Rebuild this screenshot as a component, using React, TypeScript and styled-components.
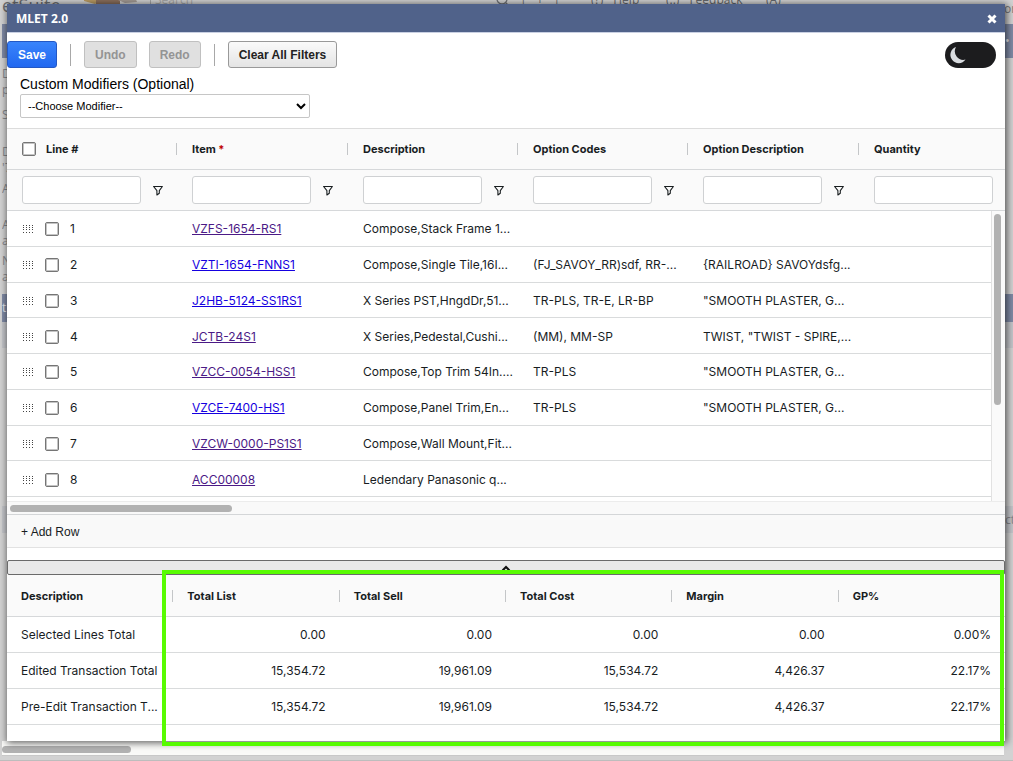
import React from "react";
import styled, { createGlobalStyle } from "styled-components";

const GlobalStyle = createGlobalStyle`
  * { box-sizing: border-box; }
  body { margin: 0; background: #d2d2d2; font-family: "Liberation Sans", Arial, sans-serif; color: #000; }
  button, input, select { font-family: inherit; margin: 0; }
`;

const uiFont = `Inter, "Liberation Sans", sans-serif`;

/* ---------- page behind the dialog ---------- */

const Page = styled.div`
  display: grid;
  grid-template-columns: minmax(0, 1fr);
  min-height: 100vh;
  overflow: hidden;
`;

const Backdrop = styled.div`
  grid-area: 1 / 1;
  display: flex;
  flex-direction: column;
  background: #d2d2d2;
  color: #77797e;
  font: 12px/16px "Open Sans", sans-serif;
`;

const TopBar = styled.div`
  display: flex;
  height: 24px;
  overflow: hidden;
  white-space: nowrap;
  justify-content: space-between;
`;

const TopItems = styled.div`
  display: flex;
  align-items: center;
  height: 16px;
  margin-top: -8px;
`;

const Brand = styled.span`
  align-self: flex-start;
  width: 84px;
  padding-left: 2px;
  font-size: 18px;
  line-height: 26px;
  color: #6d6e70;
`;

const SearchHint = styled.span`
  width: 346px;
  margin-left: 8px;
  padding-left: 4px;
  border-left: 1px solid #a5a5a5;
  color: #a8a8a8;
`;

const TopLink = styled.span<{ $w: number }>`
  width: ${(p) => p.$w}px;
  display: flex;
  gap: 10px;
  color: #66686c;
`;

const Corner = styled.span`
  width: 9px;
  line-height: 18px;
`;

const Band = styled.div<{ $h: number; $tone?: string }>`
  height: ${(p) => p.$h}px;
  flex: none;
  display: flex;
  justify-content: space-between;
  align-items: center;
  overflow: hidden;
  margin-left: 2px;
  background: ${(p) => p.$tone || "transparent"};
  color: ${(p) => (p.$tone === "#7f8aa5" ? "#e6e8ee" : "#85878c")};
`;

const Edge = styled.span`
  width: 8px;
  overflow: hidden;
  white-space: nowrap;
`;

const FootArea = styled.div`
  margin-top: auto;
  height: 20px;
  flex: none;
  display: flex;
  flex-direction: column;
  border-bottom: 1px solid #bdbdbd;
`;

const FootScroll = styled.div`
  height: 15px;
  margin: 0 9px 0 2px;
  padding-top: 5px;
  background: #fafaf8;
  border-bottom: 1px solid #c8c8c8;
`;

const Thumb = styled.div<{ $w: number }>`
  width: ${(p) => p.$w}px;
  height: 7px;
  border-radius: 4px;
  background: #b2b2b2;
`;

/* ---------- dialog ---------- */

const Dialog = styled.section`
  grid-area: 1 / 1;
  align-self: start;
  position: relative;
  margin: 4px 8px 20px 7px;
  background: #fff;
  box-shadow: 1px 1px 7px 1px rgba(0, 0, 0, 0.6);
`;

const TitleBar = styled.header`
  display: flex;
  align-items: center;
  justify-content: space-between;
  height: 29px;
  padding: 1px 8px 0 9px;
  background: #50628a;
  border-bottom: 1px solid #c9d0e2;
`;

const Title = styled.h1`
  margin: 0;
  color: #fff;
  font: bold 12px/16px "Open Sans", sans-serif;
`;

const CloseButton = styled.button`
  display: flex;
  padding: 0;
  border: 0;
  background: none;
`;

const Toolbar = styled.div`
  display: flex;
  align-items: center;
  gap: 13px;
  padding: 8px 9px 8px 0;
`;

const ToolGroup = styled.div`
  display: flex;
  gap: 12px;
`;

const ToolButton = styled.button<{ $kind?: "primary" | "plain" }>`
  height: 27px;
  padding: 0 10px;
  border: 1px solid ${(p) => (p.$kind === "primary" ? "#2458c4" : "#999")};
  border-radius: 3px;
  background: ${(p) =>
    p.$kind === "primary"
      ? "linear-gradient(#3a84fb, #2168f0)"
      : "linear-gradient(#fafafa, #e4e4e4)"};
  color: ${(p) => (p.$kind === "primary" ? "#fff" : "#222")};
  font-size: 12px;
  line-height: 16px;
  font-weight: bold;
  white-space: nowrap;
  &:disabled {
    border-color: #c0c0c0;
    background: #e0e0e0;
    color: #949494;
  }
`;

const Divider = styled.span`
  width: 1px;
  height: 22px;
  background: #a8a8a8;
`;

const ThemeSwitch = styled.label`
  display: flex;
  align-items: center;
  width: 51px;
  height: 26px;
  margin-left: auto;
  padding-left: 4px;
  border-radius: 13px;
  background: #1c1c1e;
`;

const HiddenInput = styled.input`
  appearance: none;
  width: 0;
  height: 0;
`;

const Modifier = styled.div`
  display: flex;
  flex-direction: column;
  align-items: flex-start;
  gap: 2px;
  padding: 0 13px 10px;
`;

const ModifierLabel = styled.label`
  font-size: 14px;
  line-height: 16px;
`;

const ModifierSelect = styled.select`
  width: 290px;
  height: 24px;
  padding: 0 3px;
  border: 1px solid #c6c6c6;
  border-radius: 2px;
  background: #fff;
  color: #000;
  font-size: 11px;
`;

/* ---------- line grid ---------- */

const GridPanel = styled.div`
  position: relative;
  overflow: hidden;
  padding-bottom: 4px;
  border-top: 1px solid #dcdcdc;
`;

const Table = styled.table`
  width: 100%;
  table-layout: fixed;
  border-collapse: separate;
  border-spacing: 0;
  color: #181d1f;
  font: 12px/16px ${uiFont};
`;

const LineTable = styled(Table)`
  height: 368px;
`;

const HeadCell = styled.th<{ $h: number; $pad: number }>`
  height: ${(p) => p.$h}px;
  padding: 0 0 0 ${(p) => p.$pad}px;
  background: #fafafa;
  border-bottom: 1px solid #d6d8da;
  font-size: 11px;
  font-weight: 700;
  text-align: left;
`;

const HeadInner = styled.div<{ $sep: boolean }>`
  display: flex;
  align-items: center;
  gap: 10px;
  height: 12px;
  white-space: nowrap;
  border-right: ${(p) => (p.$sep ? "1px solid #c4c6c8" : "0")};
`;

const Required = styled.span`
  color: #c00000;
`;

const FilterRow = styled.div`
  display: flex;
  align-items: center;
  gap: 12px;
`;

const FilterInput = styled.input`
  flex: none;
  width: 119px;
  height: 28px;
  padding: 0 6px;
  border: 1px solid #cfd1d3;
  border-radius: 3px;
  background: #fff;
`;

const IconButton = styled.button`
  display: flex;
  padding: 0;
  border: 0;
  background: none;
  color: #181d1f;
`;

const Cell = styled.td<{ $num?: boolean }>`
  padding: 2px 14px 0 15px;
  border-bottom: 1px solid #d9dbdc;
  overflow: hidden;
  white-space: nowrap;
  text-align: ${(p) => (p.$num ? "right" : "left")};
`;

const LineCell = styled.div`
  display: flex;
  align-items: center;
  gap: 11px;
`;

const Check = styled.input`
  appearance: none;
  flex: none;
  width: 14px;
  height: 14px;
  border: 1px solid #757575;
  border-radius: 2px;
  box-shadow: inset 0 0 0 1px #c4c4c4;
  background: #fff;
`;

const ItemLink = styled.a<{ $seen: boolean }>`
  color: ${(p) => (p.$seen ? "#4b1a86" : "#1500e0")};
  text-decoration: underline;
`;

const VScroll = styled.div`
  position: absolute;
  top: 82px;
  right: 0;
  bottom: 0;
  width: 14px;
  padding: 3px 4px 0 2px;
  background: #fafafa;
  border-left: 1px solid #e2e2e2;
`;

const VThumb = styled.div`
  height: 191px;
  border-radius: 4px;
  background: #b2b2b2;
`;

const HScroll = styled.div`
  height: 14px;
  padding: 3px 3px 0;
  background: #f9f9f9;
  border-top: 1px solid #ececec;
  border-bottom: 1px solid #d4d6d8;
`;

const AddRow = styled.button`
  display: block;
  width: 100%;
  height: 33px;
  padding: 1px 14px 0;
  border: 0;
  border-bottom: 1px solid #e2e2e2;
  background: #f9f9f9;
  color: #181d1f;
  font-size: 12px;
  text-align: left;
`;

const Splitter = styled.button`
  display: flex;
  justify-content: center;
  align-items: center;
  width: 100%;
  height: 15px;
  margin-top: 12px;
  padding: 0;
  border: 1px solid #6a6a6a;
  border-radius: 2px;
  background: #e9e9e9;
`;

/* ---------- totals ---------- */

const Totals = styled.div`
  padding-bottom: 16px;
`;

const TotalCell = styled(Cell)`
  height: 36px;
  padding: 1px 14px 0;
`;

const TotalName = styled(TotalCell)`
  padding-right: 0;
`;

const Highlight = styled.div`
  position: absolute;
  left: 155px;
  right: 1px;
  bottom: -5px;
  height: 176px;
  border: 4px solid #58fb02;
  pointer-events: none;
`;

/* ---------- icons ---------- */

const FunnelIcon = () => (
  <svg width="10" height="11" viewBox="0 0 10 11" fill="none" stroke="currentColor" strokeWidth="1.1" strokeLinejoin="round">
    <path d="M.6 1.500h8.800L6.300 5.600v2.600L3.900 10V5.600Z" />
  </svg>
);

const GripIcon = () => (
  <svg width="12" height="10" viewBox="0 0 12 10" fill="#444">
    {[1, 4, 7, 10].map((x) =>
      [1, 3, 5, 8].map((y) => <rect key={`${x}-${y}`} x={x} y={y} width="1" height="1" />)
    )}
  </svg>
);

const MoonIcon = () => (
  <svg width="17" height="18" viewBox="0 0 17 18">
    <path d="M7 1A8.3 8.3 0 1 0 16.5 13.6 8.6 8.6 0 0 1 7 1Z" fill="#d9dce0" />
  </svg>
);

const CloseIcon = () => (
  <svg width="10" height="10" viewBox="0 0 10 10" stroke="#fff" strokeWidth="3">
    <path d="M1.5 1.500l7 7M8.500 1.500l-7 7" />
  </svg>
);

const CaretIcon = () => (
  <svg width="10" height="8" viewBox="0 0 10 8" fill="none" stroke="#111" strokeWidth="2">
    <path d="M1.5 6.5L5 3l3.500 3.500" />
  </svg>
);

const LogoMark = () => (
  <svg width="58" height="16" viewBox="0 0 58 16">
    <path d="M0 0h15v10l-4 2-11-3z" fill="#b99a62" />
    <path d="M12 8h24v4H12z" fill="#8b6f5c" />
    <path d="M20 0h12v8H20z" fill="#d6d0c8" />
    <path d="M34 8l7 3 12-1-4-10H34z" fill="#a39a94" />
  </svg>
);

const SearchIcon = () => (
  <svg width="14" height="14" viewBox="0 0 14 14" fill="none" stroke="#707276" strokeWidth="1.3">
    <circle cx="6" cy="7" r="5" />
    <path d="M9.500 10.500l3 3" />
  </svg>
);

/* ---------- data ---------- */

type Line = { item: string; seen: boolean; desc: string; codes?: string; option?: string };

const lines: Line[] = [
  { item: "VZFS-1654-RS1", seen: true, desc: "Compose,Stack Frame 1..." },
  { item: "VZTI-1654-FNNS1", seen: false, desc: "Compose,Single Tile,16I...", codes: "(FJ_SAVOY_RR)sdf, RR-...", option: "{RAILROAD} SAVOYdsfg..." },
  { item: "J2HB-5124-SS1RS1", seen: false, desc: "X Series PST,HngdDr,51...", codes: "TR-PLS, TR-E, LR-BP", option: '"SMOOTH PLASTER, G...' },
  { item: "JCTB-24S1", seen: true, desc: "X Series,Pedestal,Cushi...", codes: "(MM), MM-SP", option: 'TWIST, "TWIST - SPIRE,...' },
  { item: "VZCC-0054-HSS1", seen: true, desc: "Compose,Top Trim 54In....", codes: "TR-PLS", option: '"SMOOTH PLASTER, G...' },
  { item: "VZCE-7400-HS1", seen: false, desc: "Compose,Panel Trim,En...", codes: "TR-PLS", option: '"SMOOTH PLASTER, G...' },
  { item: "VZCW-0000-PS1S1", seen: true, desc: "Compose,Wall Mount,Fit..." },
  { item: "ACC00008", seen: true, desc: "Ledendary Panasonic q..." },
];

const columns = ["Line #", "Item", "Description", "Option Codes", "Option Description", "Quantity"];
const columnWidths = [170, 171, 170, 170, 171];

const totalColumns = ["Description", "Total List", "Total Sell", "Total Cost", "Margin", "GP%"];
const totals = [
  ["Selected Lines Total", "0.00", "0.00", "0.00", "0.00", "0.00%"],
  ["Edited Transaction Total", "15,354.72", "19,961.09", "15,534.72", "4,426.37", "22.17%"],
  ["Pre-Edit Transaction T...", "15,354.72", "19,961.09", "15,534.72", "4,426.37", "22.17%"],
];

const bands: { h: number; tone?: string; left?: string; right?: string }[] = [
  { h: 34, tone: "#7f8aa5", right: "•" },
  { h: 8 },
  { h: 16, left: "D" },
  { h: 16, left: "p" },
  { h: 9 },
  { h: 16, left: "S" },
  { h: 21 },
  { h: 16, left: "D" },
  { h: 16, left: "'7" },
  { h: 5 },
  { h: 16, left: "AS" },
  { h: 20 },
  { h: 16, left: "A" },
  { h: 16, left: "as" },
  { h: 4 },
  { h: 16, left: "N" },
  { h: 16, left: "a" },
  { h: 9 },
  { h: 28, tone: "#7f8aa5", left: "t" },
  { h: 26, tone: "#c3c5c9" },
  { h: 158 },
  { h: 27, tone: "#c3c5c9", right: "ct" },
];

export default function App() {
  return (
    <Page>
      <GlobalStyle />
      <Backdrop aria-hidden="true">
        <TopBar>
          <TopItems>
            <Brand>etSuite</Brand>
            <LogoMark />
            <SearchHint>Search</SearchHint>
            <TopLink $w={95}><SearchIcon /><span>|</span><span>+</span><span>|</span></TopLink>
            <TopLink $w={75}><span>(?)</span><span>Help</span></TopLink>
            <TopLink $w={100}><span>(..)</span><span>Feedback</span></TopLink>
            <TopLink $w={20}>(A)</TopLink>
          </TopItems>
          <Corner>or</Corner>
        </TopBar>
        {bands.map((b, i) => (
          <Band key={i} $h={b.h} $tone={b.tone}>
            <Edge>{b.left}</Edge>
            <Edge>{b.right}</Edge>
          </Band>
        ))}
        <FootArea>
          <FootScroll><Thumb $w={129} /></FootScroll>
        </FootArea>
      </Backdrop>

      <Dialog role="dialog" aria-labelledby="dialog-title">
        <TitleBar>
          <Title id="dialog-title">MLET 2.0</Title>
          <CloseButton aria-label="Close"><CloseIcon /></CloseButton>
        </TitleBar>

        <Toolbar>
          <ToolButton $kind="primary">Save</ToolButton>
          <Divider />
          <ToolGroup>
            <ToolButton disabled>Undo</ToolButton>
            <ToolButton disabled>Redo</ToolButton>
          </ToolGroup>
          <Divider />
          <ToolButton $kind="plain">Clear All Filters</ToolButton>
          <ThemeSwitch>
            <HiddenInput type="checkbox" role="switch" aria-label="Dark mode" />
            <MoonIcon />
          </ThemeSwitch>
        </Toolbar>

        <Modifier>
          <ModifierLabel htmlFor="modifier">Custom Modifiers (Optional)</ModifierLabel>
          <ModifierSelect id="modifier">
            <option>--Choose Modifier--</option>
          </ModifierSelect>
        </Modifier>

        <GridPanel>
          <LineTable>
            <colgroup>
              {columnWidths.map((w, i) => <col key={i} width={w} />)}
              <col />
            </colgroup>
            <thead>
              <tr>
                {columns.map((name, i) => (
                  <HeadCell key={name} $h={41} $pad={15} scope="col">
                    <HeadInner $sep={i < 5}>
                      {i === 0 && <Check type="checkbox" aria-label="Select all lines" />}
                      <span>{name}{i === 1 && <Required> *</Required>}</span>
                    </HeadInner>
                  </HeadCell>
                ))}
              </tr>
              <tr>
                {columns.map((name, i) => (
                  <HeadCell key={name} as="td" $h={41} $pad={15}>
                    <FilterRow>
                      <FilterInput type="text" aria-label={`Filter ${name}`} />
                      {i < 5 && <IconButton aria-label={`${name} filter options`}><FunnelIcon /></IconButton>}
                    </FilterRow>
                  </HeadCell>
                ))}
              </tr>
            </thead>
            <tbody>
              {lines.map((line, i) => (
                <tr key={line.item}>
                  <Cell>
                    <LineCell>
                      <GripIcon />
                      <Check type="checkbox" aria-label={`Select line ${i + 1}`} />
                      <span>{i + 1}</span>
                    </LineCell>
                  </Cell>
                  <Cell><ItemLink href="#" $seen={line.seen}>{line.item}</ItemLink></Cell>
                  <Cell>{line.desc}</Cell>
                  <Cell>{line.codes}</Cell>
                  <Cell>{line.option}</Cell>
                  <Cell />
                </tr>
              ))}
            </tbody>
          </LineTable>
          <VScroll><VThumb /></VScroll>
        </GridPanel>
        <HScroll><Thumb $w={222} /></HScroll>
        <AddRow>+ Add Row</AddRow>

        <Splitter aria-label="Collapse totals"><CaretIcon /></Splitter>

        <Totals>
          <Table>
            <thead>
              <tr>
                {totalColumns.map((name, i) => (
                  <HeadCell key={name} $h={42} $pad={14} scope="col">
                    <HeadInner $sep={i < 5}>{name}</HeadInner>
                  </HeadCell>
                ))}
              </tr>
            </thead>
            <tbody>
              {totals.map(([name, ...values]) => (
                <tr key={name}>
                  <TotalName>{name}</TotalName>
                  {values.map((v, i) => <TotalCell key={i} $num>{v}</TotalCell>)}
                </tr>
              ))}
            </tbody>
          </Table>
        </Totals>
        <Highlight />
      </Dialog>
    </Page>
  );
}
